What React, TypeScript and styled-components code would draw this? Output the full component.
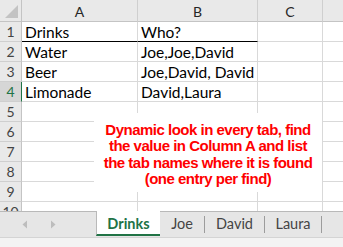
import React from "react";
import styled, { createGlobalStyle } from "styled-components";

const Global = createGlobalStyle`
  html, body { margin: 0; padding: 0; background: #ffffff; }
  * { box-sizing: border-box; }
`;

const Window = styled.div`
  width: 343px;
  height: 247px;
  overflow: hidden;
  display: flex;
  flex-direction: column;
  font-family: Lato, "Liberation Sans", sans-serif;
  position: relative;
`;

const Sheet = styled.div`
  height: 211px;
  overflow: hidden;
  position: relative;
  flex: none;
`;

const Grid = styled.div`
  display: grid;
  grid-template-columns: 22px 116px 120px 65px 40px;
  grid-template-rows: 22px repeat(10, 20px);
`;

const Corner = styled.div`
  background: #e9e9e9;
  border-right: 1px solid #c4c4c4;
  border-bottom: 1px solid #c4c4c4;
  display: flex;
  align-items: flex-end;
  justify-content: flex-end;
  padding: 0 3px 3px 0;
`;

const ColHead = styled.div`
  background: #e9e9e9;
  border-right: 1px solid #cfcfcf;
  border-bottom: 1px solid #c4c4c4;
  display: flex;
  align-items: center;
  justify-content: center;
  font-size: 14px;
  color: #262626;
  padding-top: 1px;
`;

const RowHead = styled.div<{ $active?: boolean }>`
  background: ${(p) => (p.$active ? "#d6d6d6" : "#e9e9e9")};
  border-right: 1px solid ${(p) => (p.$active ? "#217346" : "#c4c4c4")};
  border-bottom: 1px solid #cfcfcf;
  display: flex;
  align-items: center;
  justify-content: center;
  font-size: 14px;
  color: ${(p) => (p.$active ? "#217346" : "#444444")};
`;

const Cell = styled.div<{ $thick?: boolean }>`
  border-right: 1px solid #d9d9d9;
  border-bottom: 1px solid ${(p) => (p.$thick ? "#000000" : "#d9d9d9")};
  font-size: 15.5px;
  color: #000000;
  padding: 0 0 0 3px;
  display: flex;
  align-items: center;
  white-space: nowrap;
  overflow: visible;
`;

const TextBox = styled.div`
  position: absolute;
  left: 94px;
  top: 113px;
  width: 228px;
  height: 79px;
  background: #ffffff;
  color: #ff0000;
  font-family: "Liberation Sans", Arial, sans-serif;
  font-weight: bold;
  font-size: 15px;
  letter-spacing: -0.5px;
  line-height: 16.4px;
  text-align: center;
  padding-top: 9px;
`;

const TabBar = styled.div`
  height: 27px;
  flex: none;
  background: #e6e6e6;
  border-top: 1px solid #b9b9b9;
  border-bottom: 1px solid #d4d4d4;
  display: flex;
  align-items: stretch;
`;

const Nav = styled.div`
  width: 96px;
  flex: none;
  display: flex;
  align-items: center;
  padding-left: 22px;
  gap: 22px;
`;

const Tab = styled.div<{ $active?: boolean; $width: number }>`
  width: ${(p) => p.$width}px;
  flex: none;
  display: flex;
  align-items: center;
  justify-content: center;
  font-size: 14.5px;
  position: relative;
  color: ${(p) => (p.$active ? "#217346" : "#444444")};
  font-weight: ${(p) => (p.$active ? 700 : 400)};
  background: ${(p) => (p.$active ? "#ffffff" : "transparent")};
  border-left: ${(p) => (p.$active ? "1px solid #b9b9b9" : "none")};
  border-bottom: ${(p) => (p.$active ? "2px solid #217346" : "2px solid transparent")};
  margin-top: ${(p) => (p.$active ? "-1px" : "0")};
  margin-bottom: 1px;
  padding-top: 1px;
`;

const Sep = styled.div`
  width: 1px;
  flex: none;
  background: #9c9c9c;
  margin: 4px 0 4px;
`;

const Status = styled.div`
  flex: 1;
  background: #f3f3f3;
`;

const cols = ["A", "B", "C", ""];
const data: [string, string][] = [
  ["Drinks", "Who?"],
  ["Water", "Joe,Joe,David"],
  ["Beer", "Joe,David, David"],
  ["Limonade", "David,Laura"],
];

const Arrow = ({ dir }: { dir: "l" | "r" }) => (
  <svg width="6" height="9" viewBox="0 0 6 9">
    {dir === "l" ? (
      <path d="M5 0.5 L0.5 4.5 L5 8.5 Z" fill="#bdbdbd" />
    ) : (
      <path d="M1 0.5 L5.5 4.5 L1 8.5 Z" fill="#bdbdbd" />
    )}
  </svg>
);

export default function App() {
  const rows = Array.from({ length: 10 }, (_, i) => i + 1);
  return (
    <Window>
      <Global />
      <Sheet>
        <Grid>
          <Corner>
            <svg width="13" height="13" viewBox="0 0 13 13">
              <path d="M13 0 L13 13 L0 13 Z" fill="#c3c3c3" />
            </svg>
          </Corner>
          {cols.map((c, i) => (
            <ColHead key={i}>{c}</ColHead>
          ))}
          {rows.map((r) => (
            <React.Fragment key={r}>
              <RowHead $active={r === 4}>{r}</RowHead>
              <Cell $thick={r === 1}>{data[r - 1]?.[0] ?? ""}</Cell>
              <Cell $thick={r === 1}>{data[r - 1]?.[1] ?? ""}</Cell>
              <Cell />
              <Cell />
            </React.Fragment>
          ))}
        </Grid>
        <TextBox>
          Dynamic look in every tab, find
          <br />
          the value in Column A and list
          <br />
          the tab names where it is found
          <br />
          (one entry per find)
        </TextBox>
      </Sheet>
      <TabBar>
        <Nav>
          <Arrow dir="l" />
          <Arrow dir="r" />
        </Nav>
        <Tab $active $width={64}>Drinks</Tab>
        <Tab $width={44}>Joe</Tab>
        <Sep />
        <Tab $width={59}>David</Tab>
        <Sep />
        <Tab $width={56}>Laura</Tab>
        <Sep />
      </TabBar>
      <Status />
    </Window>
  );
}
